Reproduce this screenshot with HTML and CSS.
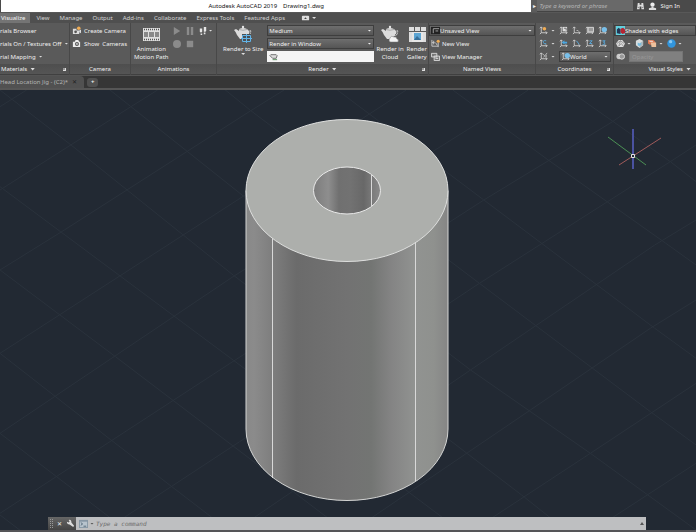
FILE: index.html
```html
<!DOCTYPE html>
<html lang="en">
<head>
<meta charset="utf-8">
<title>Autodesk AutoCAD 2019 - Drawing1.dwg</title>
<link rel="stylesheet" href="styles.css">
</head>
<body>
<svg class="defs" aria-hidden="true">
  <symbol id="teapot" viewBox="0 0 18 18">
    <path d="M5 4Q9 2 13 4L15 6Q18 4 17 8Q16 11 13 11L11 14H6L3 10Q2 7 0 5L2 4L5 6Z" fill="#dcdcdc"/>
    <path d="M15 7Q17 6 16 8Q15 10 14 10" fill="none" stroke="#5b5b5b"/>
    <path d="M5 4.500Q9 6 13 4.500" fill="none" stroke="#aaa"/><circle cx="9" cy="2" r="1.200" fill="#e6e6e6"/>
  </symbol>
  <symbol id="axes" viewBox="0 0 10 10">
    <path d="M2.500 1V7.500H9M1 2.500L2.500 1L4 2.500M7.500 6L9 7.500L7.500 9M2.500 7.500L1 9" fill="none" stroke="#d0d0d0"/>
  </symbol>
</svg>
<div class="app">
  <header class="titlebar">
    <h1 class="caption"><span>Autodesk AutoCAD 2019</span><span>Drawing1.dwg</span></h1>
    <button class="expand" aria-label="Expand search">▸</button>
    <input class="search" type="text" placeholder="Type a keyword or phrase" aria-label="Search">
    <button class="title-btn" aria-label="Find"><svg class="ico" viewBox="0 0 10 10"><path d="M2 1H4V3H6V1H8L9 8H6V5H4V8H1Z" fill="#ddd"/><path d="M2 6H3M7 6H8" stroke="#555"/></svg></button>
    <button class="title-btn"><svg class="ico" viewBox="0 0 10 10"><circle cx="5" cy="3" r="2.400" fill="#eee"/><path d="M4 5H6V6L9 7V9H1V7L4 6Z" fill="#ddd"/></svg>Sign In</button>
  </header>

  <nav class="tabs" aria-label="Ribbon">
    <button class="tab active">Visualize</button>
    <button class="tab">View</button>
    <button class="tab">Manage</button>
    <button class="tab">Output</button>
    <button class="tab">Add-ins</button>
    <button class="tab">Collaborate</button>
    <button class="tab">Express Tools</button>
    <button class="tab">Featured Apps</button>
    <button class="tab more" aria-label="Ribbon display"><svg class="ico" viewBox="0 0 10 10"><rect x="1" y="2" width="8" height="5" rx="1" fill="#ddd"/><path d="M3.500 5.500L5 3.500L6.500 5.500Z" fill="#444"/></svg><i class="arrow"></i></button>
  </nav>

  <main class="ribbon">
    <section class="panel">
      <div class="rows">
        <button class="cmd">rials Browser</button>
        <button class="cmd">rials On / Textures Off<i class="arrow"></i></button>
        <button class="cmd">rial Mapping<i class="arrow"></i></button>
      </div>
      <h2 class="foot start">Materials<i class="arrow big"></i><i class="launch"></i></h2>
    </section>

    <section class="panel">
      <div class="rows inset">
        <button class="cmd"><svg class="ico" viewBox="0 0 10 10"><path d="M1 3H5V5H8V9H1Z" fill="#ddd"/><circle cx="4" cy="6.500" r="1.500" fill="#555"/><circle cx="7.500" cy="2.500" r="2" fill="#efac55"/><path d="M8 5L10 4V8L8 7Z" fill="#ddd"/></svg>Create Camera</button>
        <button class="cmd"><svg class="ico" viewBox="0 0 10 10"><path d="M1 3H3L4 1H7L8 3H9V9H1Z" fill="#eee"/><circle cx="5.500" cy="5.500" r="2.200" fill="#555"/><circle cx="5.500" cy="5.500" r="1" fill="#ddd"/></svg>Show&nbsp; Cameras</button>
      </div>
      <h2 class="foot">Camera</h2>
    </section>

    <section class="panel">
      <div class="split">
        <button class="large"><svg class="pic" viewBox="0 0 18 18"><path d="M1 3H18V16H1Z" fill="#dedede"/><path d="M2 4.500H17M2 14.500H17" stroke="#555" stroke-width="1.500" stroke-dasharray="1 1"/><path d="M2 7H6V12H2ZM7 7H12V12H7ZM13 7H17V12H13Z" fill="#888"/></svg><span>Animation<br>Motion Path</span></button>
        <div class="media">
          <button class="cell" aria-label="Play"><svg class="ico" viewBox="0 0 10 10"><path d="M1 0L9 5L1 10Z" fill="#8b8b8b"/></svg></button>
          <button class="cell" aria-label="Pause"><svg class="ico" viewBox="0 0 10 10"><path d="M1 0H4V10H1ZM6 0H9V10H6Z" fill="#8b8b8b"/></svg></button>
          <button class="cell" aria-label="Walk"><svg class="ico" viewBox="0 0 10 10"><path d="M1 2H4V6L3 7H2L1 6ZM2 8H4V10H2ZM6 0H9V5L8 6H6ZM6 7H8V9H6Z" fill="#e6e6e6"/></svg><i class="arrow"></i></button>
          <button class="cell" aria-label="Record"><svg class="ico" viewBox="0 0 10 10"><circle cx="5" cy="5" r="5" fill="#8b8b8b"/></svg></button>
          <button class="cell" aria-label="Stop"><svg class="ico" viewBox="0 0 10 10"><path d="M1 1H9V9H1Z" fill="#8b8b8b"/></svg></button>
        </div>
      </div>
      <h2 class="foot">Animations</h2>
    </section>

    <section class="panel">
      <div class="split render">
        <button class="large"><svg class="pic" viewBox="0 0 18 18"><use href="#teapot"/><path d="M8 9H17V17H8Z" fill="#4d5052"/><path d="M8.500 10.500H16.500V16.500H8.500ZM12.500 9V18M7 13.500H18" fill="none" stroke="#62b4e8"/></svg><span>Render to Size</span><i class="arrow"></i></button>
        <div class="rows fields">
          <label class="combo"><select aria-label="Quality"><option>Medium</option></select></label>
          <label class="combo"><select aria-label="Target"><option>Render in Window</option></select></label>
          <div class="progress"><svg class="ico" viewBox="0 0 10 10"><path d="M2 3H8L9 4L8 7H4L1 4Z" fill="#ddd" stroke="#666"/><path d="M4 8.500H9" stroke="#4c8a52"/></svg></div>
        </div>
        <button class="large"><svg class="pic" viewBox="0 0 18 18"><use href="#teapot"/><path d="M9 17Q7 15 9 13Q10 10 13 12Q15 11 16 14Q18 14 17 17Z" fill="#f4f4f4" stroke="#777" stroke-width=".5"/></svg><span>Render in<br>Cloud</span></button>
        <button class="large"><svg class="pic" viewBox="0 0 18 18"><path d="M1 2H6V6H1ZM7 2H12V6H7ZM13 2H18V6H13ZM1 7H4V17H1ZM15 7H18V17H15Z" fill="#ddd"/><path d="M4 7H15V17H4Z" fill="#e6e6e6"/><path d="M6 8H13V15H6Z" fill="#5da5d3"/><path d="M6 15L9 11L13 15Z" fill="#386f98"/></svg><span>Render<br>Gallery</span></button>
      </div>
      <h2 class="foot">Render<i class="arrow big"></i><i class="launch"></i></h2>
    </section>

    <section class="panel">
      <div class="rows">
        <label class="combo with-icon"><svg class="ico" viewBox="0 0 10 10"><path d="M0 1H10V9H0Z" fill="#222"/><path d="M2.500 8V3H9M5 5.500H8" fill="none" stroke="#aaa"/></svg><select aria-label="View"><option>Unsaved View</option></select></label>
        <button class="cmd pad"><svg class="ico" viewBox="0 0 10 10"><path d="M1 1V8H8M3 2V6M1 4H4M8 4V9" fill="none" stroke="#ccc"/><path d="M5 4L7 7" stroke="#ccc"/><circle cx="8" cy="2.500" r="1.800" fill="#efac55"/></svg>New View</button>
        <button class="cmd pad"><svg class="ico" viewBox="0 0 10 10"><path d="M.5 1.500H6.500V5.500H.5ZM3.500 4.500H9.500V9.500H3.500Z" fill="#777" stroke="#ddd"/><path d="M5 7H8" stroke="#eee"/></svg>View Manager</button>
      </div>
      <h2 class="foot">Named Views</h2>
    </section>

    <section class="panel">
      <div class="coords">
        <button class="cell" aria-label="Origin"><svg class="ico" viewBox="0 0 10 10"><use href="#axes"/><circle cx="6" cy="3" r="2" fill="#efac55"/></svg><i class="arrow"></i></button>
        <button class="cell" aria-label="UCS icon"><svg class="ico" viewBox="0 0 10 10"><use href="#axes"/><path d="M4 1H9V6H4Z" fill="#ddd"/><path d="M5.500 2.500H8V5" fill="none" stroke="#666"/></svg></button>
        <button class="cell" aria-label="UCS"><svg class="ico" viewBox="0 0 10 10"><use href="#axes"/><path d="M5 5H7" stroke="#bbb"/></svg></button>
        <button class="cell" aria-label="Named UCS"><svg class="ico" viewBox="0 0 10 10"><use href="#axes"/><path d="M3.500 1.500H9.500V6.500H3.500Z" fill="#999" stroke="#ddd"/></svg></button>
        <button class="cell" aria-label="World UCS"><svg class="ico" viewBox="0 0 10 10"><use href="#axes"/><circle cx="7" cy="4" r="3" fill="#79bfe9"/></svg></button>
        <button class="cell" aria-label="Rotate"><svg class="ico" viewBox="0 0 10 10"><use href="#axes"/><path d="M8 2Q4 1 5 4Q5 6 8 5" fill="none" stroke="#58a9dd"/></svg><i class="arrow"></i></button>
        <button class="cell" aria-label="Previous"><svg class="ico" viewBox="0 0 10 10"><use href="#axes"/><path d="M3 4L6 1.500V3H9V5H6V6Z" fill="#4ba7e1"/></svg></button>
        <button class="cell" aria-label="Object"><svg class="ico" viewBox="0 0 10 10"><use href="#axes"/><path d="M5 2L8 6" stroke="#58a9dd"/></svg></button>
        <button class="cell" aria-label="Z axis"><svg class="ico" viewBox="0 0 10 10"><use href="#axes"/><path d="M5 2H8L5 5H8" fill="none" stroke="#58a9dd"/></svg></button>
        <button class="cell" aria-label="Three point"><svg class="ico" viewBox="0 0 10 10"><use href="#axes"/><path d="M5 2H8L6 3.500Q9 4 7 6H5" fill="none" stroke="#58a9dd"/></svg></button>
        <button class="cell" aria-label="View UCS"><svg class="ico" viewBox="0 0 10 10"><use href="#axes"/><path d="M4 2L7 5M9 1L5 6M8 3V6" stroke="#bbb"/></svg><i class="arrow"></i></button>
        <label class="combo with-icon wide"><svg class="ico" viewBox="0 0 10 10"><use href="#axes"/><circle cx="7" cy="4" r="3" fill="#79bfe9"/></svg><select aria-label="UCS name"><option>World</option></select></label>
      </div>
      <h2 class="foot">Coordinates<i class="launch"></i></h2>
    </section>

    <section class="panel">
      <div class="rows">
        <label class="combo with-icon bare"><svg class="ico" viewBox="0 0 10 10"><path d="M0 0H10V10H0Z" fill="#62cfdd"/><path d="M1 8V4L3 2L5 4V9Z" fill="#253654"/><path d="M5 3L8 2L10 4V8L7 9L5 7Z" fill="#b52531"/></svg><select aria-label="Visual style"><option>Shaded with edges</option></select></label>
        <div class="strip">
          <button class="cell" aria-label="X-ray"><svg class="ico" viewBox="0 0 10 10"><path d="M3 1H7L10 5L8 9H2L0 5Z" fill="#ddd"/><path d="M5 2L3 8L6 5L8 8M1 5L5 2L9 5" fill="none" stroke="#777" stroke-width=".7"/></svg><i class="arrow"></i></button>
          <button class="cell" aria-label="Faces"><svg class="ico" viewBox="0 0 10 10"><path d="M5 0L9 2V7L5 10L1 7V2Z" fill="#d9dedf"/><path d="M5 5L9 2V7L5 10Z" fill="#aeb8bc"/><path d="M3 4L5 5L7 4V6L5 8L3 7Z" fill="#76bcdf"/></svg></button>
          <button class="cell" aria-label="Materials"><svg class="ico" viewBox="0 0 10 10"><path d="M0 1H6L8 3V5H3V7L0 5Z" fill="#df7852"/><path d="M3 4H9V9H4Z" fill="#edc19d"/><path d="M1 2H5L6 3H2Z" fill="#eee"/></svg><i class="arrow"></i></button>
          <button class="cell" aria-label="Environment"><svg class="ico" viewBox="0 0 10 10"><circle cx="5" cy="5" r="4.700" fill="#3295dc"/><circle cx="4" cy="3" r="1.800" fill="#88c8f2"/></svg><i class="arrow"></i></button>
        </div>
        <div class="strip opacity">
          <svg class="ico" viewBox="0 0 10 10"><circle cx="3.500" cy="5" r="3" fill="#ccc"/><circle cx="6.500" cy="5" r="3" fill="#999" stroke="#ddd"/></svg>
          <input type="text" placeholder="Opacity" aria-label="Opacity">
        </div>
      </div>
      <h2 class="foot end">Visual Styles<i class="arrow big"></i></h2>
    </section>
  </main>

  <nav class="files" aria-label="Drawings">
    <div class="file"><a href="#drawing">Head Location Jig - (C2)*</a><button class="close" aria-label="Close drawing">✕</button></div>
    <button class="add" aria-label="New drawing">+</button>
  </nav>

  <div class="canvas" id="drawing">
    <svg class="model" viewBox="0 0 696 440" preserveAspectRatio="xMidYMin slice" role="img" aria-label="Shaded hollow cylinder">
      <defs>
        <linearGradient id="side">
          <stop offset="0" stop-color="#898989"/><stop offset=".04" stop-color="#8b8b8b"/><stop offset=".13" stop-color="#7e7e7e"/><stop offset=".25" stop-color="#6b6b6b"/><stop offset=".5" stop-color="#727272"/><stop offset=".62" stop-color="#737573"/><stop offset=".72" stop-color="#848484"/><stop offset=".84" stop-color="#919391"/><stop offset=".93" stop-color="#8f918e"/><stop offset="1" stop-color="#858585"/>
        </linearGradient>
        <linearGradient id="bore">
          <stop offset="0" stop-color="#7c7c7c"/><stop offset=".22" stop-color="#8e8e8e"/><stop offset=".38" stop-color="#707070"/><stop offset=".55" stop-color="#727272"/><stop offset=".75" stop-color="#686868"/><stop offset=".9" stop-color="#7e7e7e"/><stop offset="1" stop-color="#8a8a8a"/>
        </linearGradient>
      </defs>
      <g class="grid" transform="scale(.4439 .3333)">
        <path d="M0 0L160 165L525 555L1175 1215L1280 1326M210 -40L295 50L550 320L1060 840L1330 1090L1568 1320M480 -30L565 62L1080 580L1465 965L1568 1065M760 0L1090 330L1475 715L1568 805M1020 0L1235 210L1500 460L1568 525M1280 0L1510 215L1568 275M1530 0L1568 35M0 290L525 810L1040 1326M0 540L260 800L780 1326M0 790L250 1050L520 1326M0 1030L290 1326M0 1275L50 1326"/>
        <path d="M0 300L295 50L355 0M0 540L145 420L565 62L640 0M0 790L550 317L915 0M0 1030L525 560L1100 80L1190 0M0 1270L530 810L1090 330L1380 95L1480 0M230 1326L540 1055L1080 580L1510 215L1568 165M525 1326L1060 840L1475 465L1568 390M790 1326L1195 960L1465 715L1568 630M1060 1326L1330 1090L1568 880M1330 1326L1568 1120M0 50L60 0"/>
      </g>
      <path d="M246 100.500V339A101 71.500 0 0 0 448 339V100.500Z" fill="url(#side)" stroke="#d4d5d4"/>
      <path d="M272.500 140V388M415.500 140V391" class="seam"/>
      <ellipse cx="347" cy="100.500" rx="101" ry="71" fill="#adafac" stroke="#dedfde"/>
      <ellipse cx="347" cy="100.500" rx="33.500" ry="23.500" fill="url(#bore)" stroke="#e9e9e9"/>
      <path d="M371.500 84V117" class="seam"/>
      <g fill="none">
        <path d="M633 39V79" stroke="#4a52a0" stroke-width="2"/><path d="M608 47L646 75" stroke="#4c9155"/><path d="M661 48L619 75" stroke="#a05a5a"/>
        <path d="M631.500 64.500H634.500V67.500H631.500Z" fill="#222933" stroke="#e2e2e2"/>
      </g>
    </svg>
    <form class="command">
      <div class="tools"><i class="grip"></i><button type="button" aria-label="Close">✕</button><button type="button" aria-label="Customize"><svg class="ico" viewBox="0 0 10 10"><path d="M1 3L3 4L4 3L3 1Q6 0 6 4L9 7.500L8 9L4 6Q1 6 1 3Z" fill="#ddd"/></svg></button></div>
      <svg class="ico prompt" viewBox="0 0 10 10"><path d="M0 1H10V10H0Z" fill="#8797a5"/><path d="M1 3H9V9H1Z" fill="#b7c3cd"/><path d="M2 4L4 5.500L2 7M5 8H8" fill="none" stroke="#4f6475"/></svg><i class="arrow"></i>
      <input type="text" placeholder="Type a command" aria-label="Command">
      <button type="button" class="history" aria-label="History"><i class="arrow up"></i></button>
    </form>
  </div>
</div>
</body>
</html>
```
FILE: styles.css
```css
* { box-sizing: border-box; }
body { margin: 0; font: 6px/8px "Noto Sans", "Open Sans", sans-serif; color: #f0f0f0; background: #222933; }
button, input, select { margin: 0; padding: 0; border: 0; font: inherit; color: inherit; background: none; min-width: 0; }
button { white-space: nowrap; }
h1, h2 { margin: 0; font: inherit; }
.defs { position: absolute; width: 0; height: 0; }
.app { display: flex; flex-direction: column; min-height: 100vh; border-bottom: 2px solid #555558; }
.ico { width: 9px; height: 9px; flex: none; display: block; }

.arrow { display: block; flex: none; width: 4px; height: 2px; background: #ddd; clip-path: polygon(0 0, 100% 0, 50% 100%); }
.arrow.big { width: 5px; height: 3px; }
.arrow.up { height: 3px; background: #222; clip-path: polygon(50% 0, 100% 100%, 0 100%); }
.launch { position: absolute; right: 3px; width: 3px; height: 3px; border: solid #ddd; border-width: 0 1px 1px 0; background: #999; }

.titlebar { display: flex; height: 12px; background: #4a4a4a; border-left: 1px solid #4a4a4a; }
.caption { flex: 1; display: flex; justify-content: center; align-items: center; gap: 6px; background: #fff; color: #111; }
.expand { width: 6px; background: #5c5c5c; }
.search { width: 96px; padding: 0 2px; background: #696969; border-bottom: 1px solid #444; font-style: italic; }
.search::placeholder { color: #b5b5b5; opacity: 1; }
.title-btn { display: flex; align-items: center; gap: 3px; padding-left: 3px; }
.title-btn:last-child { padding: 0 16px 0 3px; }

.tabs { display: flex; height: 11px; background: #4f4f4f; border-top: 1px solid #585858; }
.tab { padding: 0 5px; color: #d4d4d4; }
.tab.active { padding: 0 5px 0 1px; margin-right: 1px; background: #747474; color: #f4f4f4; }
.tab.more { display: flex; align-items: center; gap: 2px; margin-left: 6px; }

.ribbon { display: grid; grid-template-columns: 70px 61px 86px minmax(212px, 1fr) 107px 78px 82px; height: 52px; background: #5a5a5a; }
.panel { display: flex; flex-direction: column; justify-content: space-between; overflow: hidden; padding-top: 2px; border-right: 1px solid #484848; }
.panel:last-child { border-right: 0; }
.foot { position: relative; display: flex; justify-content: center; align-items: center; gap: 3px; height: 11px; background: linear-gradient(#4e4e4e, #555); border-bottom: 1px solid #404040; }
.foot.start { justify-content: flex-start; padding-left: 1px; }
.foot.end { justify-content: flex-end; padding-right: 5px; }
.rows { display: grid; grid-template-rows: repeat(3, 11px); gap: 2px; }
.rows.inset { padding-left: 2px; }
.cmd { display: flex; align-items: center; gap: 3px; text-align: left; }
.cmd.pad { padding-left: 2px; gap: 2px; }
.split { display: flex; align-items: flex-start; }
.large { display: flex; flex-direction: column; align-items: center; flex: none; padding: 0 3px; }
.pic { width: 18px; height: 18px; margin-bottom: 2px; }
.media { display: grid; grid-template-columns: 13px 13px 1fr; grid-auto-rows: 11px; gap: 2px 0; padding-left: 1px; }
.cell { display: flex; align-items: center; gap: 2px; }
.media .ico { width: 8px; height: 8px; }
.render { gap: 1px; padding-left: 3px; }
.render .large { padding: 0 1px; }
.render .large:first-child { padding: 0 3px; }
.fields { flex: 1; }

.combo { position: relative; display: flex; align-items: center; background: linear-gradient(#6e6e6e, #555); border: 1px solid #3e3e3e; }
.combo::after { content: ""; position: absolute; right: 2px; width: 4px; height: 2px; background: #eee; clip-path: polygon(0 0, 100% 0, 50% 100%); }
.combo select { flex: 1; appearance: none; padding-left: 1px; outline: 0; }
.with-icon { padding-left: 1px; }
.with-icon select { padding-left: 0; }
.bare::after { display: none; }
.progress { display: flex; align-items: center; padding-left: 2px; background: #f5f5f5; }

.coords { display: grid; grid-template-columns: 20px repeat(4, 13px); grid-auto-rows: 11px; gap: 2px 0; padding-left: 3px; }
.coords .cell { gap: 3px; }
.wide { grid-column: 2 / -1; }
.strip { display: flex; align-items: center; gap: 4px; padding-left: 2px; }
.opacity input { width: 54px; height: 11px; padding-left: 2px; background: #808080; border: 1px solid #757575; }
.opacity input::placeholder { color: #989898; opacity: 1; }

.files { display: flex; align-items: center; gap: 3px; height: 15px; background: #363636; border-top: 1px solid #555; border-bottom: 2px solid #565656; }
.file { display: flex; align-items: center; gap: 4px; height: 100%; padding-right: 7px; background: #515151; border-radius: 0 4px 0 0; }
.file a { color: #b4b4b4; text-decoration: none; }
.close { color: #222; }
.add { width: 11px; height: 9px; line-height: 8px; font-weight: bold; background: #505050; border-radius: 3px; }

.canvas { position: relative; flex: 1; display: flex; overflow: hidden; background: #222933; }
.model { display: block; width: 100%; height: auto; }
.grid path { fill: none; stroke: #2a323c; stroke-width: 1px; vector-effect: non-scaling-stroke; }
.seam { fill: none; stroke: #d8d8d8; }
.command { position: absolute; left: 48px; right: 50px; bottom: 0; display: flex; align-items: center; gap: 2px; height: 13px; background: #bebfc1; color: #333; }
.tools { display: flex; align-items: center; gap: 4px; width: 28px; height: 100%; padding-left: 2px; background: linear-gradient(#666, #444); color: #eee; }
.grip { width: 3px; height: 9px; border: dotted #999; border-width: 0 1px; }
.prompt { margin-left: 1px; }
.command .arrow { background: #555; }
.command input { flex: 1; font: italic 6px/8px "DejaVu Sans Mono", monospace; }
.command input::placeholder { color: #6b6b6b; opacity: 1; }
.history { padding: 0 2px; }
```
